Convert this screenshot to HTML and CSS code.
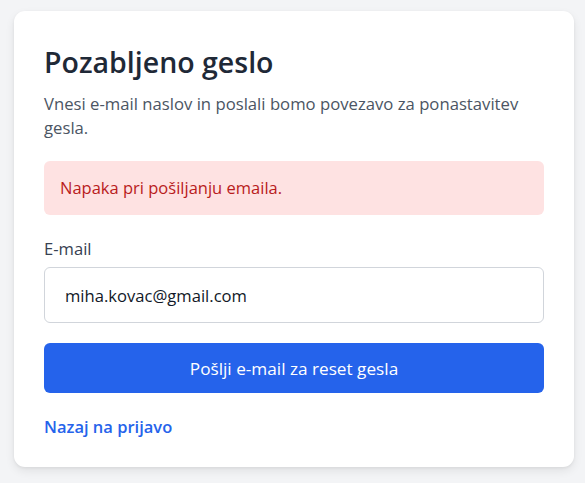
FILE: index.html
```html
<!DOCTYPE html>
<html lang="sl">
<head>
<meta charset="utf-8">
<link rel="stylesheet" href="styles.css">
</head>
<body>
<main class="page">
  <section class="card">
    <h1 class="title">Pozabljeno geslo</h1>
    <p class="lead">Vnesi e-mail naslov in poslali bomo povezavo za ponastavitev gesla.</p>
    <div class="alert">Napaka pri pošiljanju emaila.</div>
    <form class="form">
      <label class="label" for="email">E-mail</label>
      <input class="input" id="email" type="email" value="miha.kovac@gmail.com">
      <button class="button" type="button">Pošlji e-mail za reset gesla</button>
    </form>
    <a class="link" href="#">Nazaj na prijavo</a>
  </section>
</main>
</body>
</html>
```
FILE: styles.css
```css
* { box-sizing: border-box; }
html, body { margin: 0; padding: 0; }
body {
  background: #f3f4f6;
  font-family: "Open Sans", "Noto Sans", sans-serif;
  color: #1f2937;
}
.page {
  padding: 11px 11px 16px 14px;
}
.card {
  background: #fff;
  border-radius: 11px;
  box-shadow: 0 4px 10px rgba(0,0,0,0.08), 0 1px 3px rgba(0,0,0,0.06);
  padding: 33px 30px 28px 30px;
  display: flex;
  flex-direction: column;
}
.title {
  margin: 0;
  font-size: 28.5px;
  line-height: 36px;
  font-weight: 600;
  color: #1f2937;
}
.lead {
  margin: 12px 0 0;
  font-size: 16.7px;
  line-height: 24px;
  color: #4b5563;
}
.alert {
  margin-top: 21px;
  background: #fee2e2;
  color: #b91c1c;
  border-radius: 6px;
  padding: 15px 16px;
  font-size: 16.5px;
  line-height: 24px;
}
.form {
  display: flex;
  flex-direction: column;
  margin-top: 22px;
}
.label {
  font-size: 16.6px;
  line-height: 24px;
  color: #374151;
  margin-bottom: 6px;
}
.input {
  height: 56px;
  border: 1px solid #d1d5db;
  border-radius: 6px;
  padding: 0 20px;
  font-family: inherit;
  font-size: 16.6px;
  color: #111827;
  background: #fff;
}
.button {
  margin-top: 20px;
  height: 50px;
  border: 0;
  border-radius: 6px;
  background: #2563eb;
  color: #fff;
  font-family: inherit;
  font-size: 17.2px;
}
.link {
  margin-top: 22px;
  align-self: flex-start;
  color: #2563eb;
  font-weight: 600;
  font-size: 16.5px;
  line-height: 24px;
  text-decoration: none;
}
```
